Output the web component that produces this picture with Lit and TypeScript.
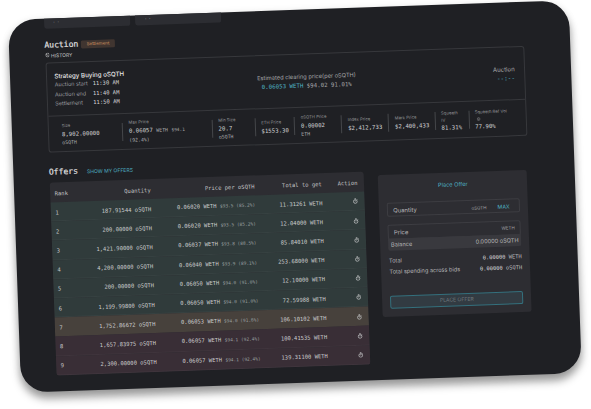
import { LitElement, html, svg, css } from "lit";
import { customElement } from "lit/decorators.js";

type Offer = [string, string, string, string, string];

const OFFERS: Offer[] = [
  ["187.91544", "0.06020", "$93.5 (85.2%)", "11.31261", "bid"],
  ["200.00000", "0.06020", "$93.5 (85.2%)", "12.04000", "bid"],
  ["1,421.90000", "0.06037", "$93.8 (88.5%)", "85.84010", "bid"],
  ["4,200.00000", "0.06040", "$93.9 (89.1%)", "253.68000", "bid"],
  ["200.00000", "0.06050", "$94.0 (91.0%)", "12.10000", "bid"],
  ["1,199.99800", "0.06050", "$94.0 (91.0%)", "72.59988", "bid"],
  ["1,752.86672", "0.06053", "$94.0 (91.6%)", "106.10102", "edge"],
  ["1,657.83975", "0.06057", "$94.1 (92.4%)", "100.41535", "out"],
  ["2,300.00000", "0.06057", "$94.1 (92.4%)", "139.31100", "out"],
];

const timer = svg`<circle cx="5" cy="6" r="3.4"/><path d="M3.6 .9h2.8M5 6V3.8M7.6 3.3l.9-.9"/>`;

@customElement("app-root")
export class AppRoot extends LitElement {
  static styles = css`
    :host {
      display: block;
      width: 591px;
      height: 409px;
      overflow: hidden;
      background: #fff;
      font-family: Inter, "Noto Sans", sans-serif;
      color: #b9b9bb;
      --mono: "DejaVu Sans Mono", "Liberation Mono", monospace;
      --cyan: #4fb3c4;
      --line: #37383c;
    }
    :host::before { content: ""; display: table; }
    * { box-sizing: border-box; }
    .tablet {
      width: 560.5px;
      height: 372.5px;
      margin: 20px 0 0 8.4px;
      padding: 0 46px 0 35.5px;
      border-radius: 27px;
      background: #1f2024;
      box-shadow: 0 7px 9px rgba(0, 0, 0, 0.36), 0 2px 8px rgba(0, 0, 0, 0.1);
      transform: rotate(-2.02deg);
      transform-origin: 0 0;
      display: flex;
      flex-direction: column;
      white-space: nowrap;
    }
    .tabs { display: flex; gap: 5.7px; height: 9.6px; }
    .tab {
      width: 86px;
      background: #2c2d32;
      border-radius: 0 0 2.5px 2.5px;
      padding: 0.5px 0 0 9px;
      font: 5px/2px var(--mono);
      letter-spacing: -1px;
      color: #8b8c8f;
    }
    .title-row { display: flex; align-items: center; height: 10px; margin-top: 12.4px; }
    .title {
      font: 8.05px/10px var(--mono);
      color: #e4e4e5;
      -webkit-text-stroke: 0.15px currentColor;
    }
    .tag {
      width: 33.7px;
      height: 7.6px;
      margin-left: 2.9px;
      border-radius: 1.5px;
      background: #403530;
      color: #cf9361;
      font-size: 4.5px;
      line-height: 7.6px;
      text-align: center;
    }
    .history {
      display: flex;
      align-items: center;
      gap: 1.4px;
      height: 9.6px;
      font-size: 4.95px;
      color: #cacacc;
    }
    .history svg { width: 4.8px; height: 4.8px; }
    svg { fill: none; stroke: currentColor; }
    .auction {
      height: 90.2px;
      margin-top: 2.1px;
      border: 1px solid var(--line);
      border-radius: 3px;
    }
    .summary {
      display: flex;
      height: 53.8px;
      padding: 8.2px 8.9px 0 7.8px;
      border-bottom: 1px solid var(--line);
      line-height: 9.5px;
    }
    .schedule { width: 160px; }
    .strategy { font-size: 6.2px; font-weight: 500; color: #e8e8e9; }
    .time { display: grid; grid-template-columns: 38px auto; font-size: 5.5px; color: #9c9da0; }
    .mono { font-family: var(--mono); }
    .time .mono { font-size: 5.5px; color: #d6d6d8; }
    .center {
      width: 184px;
      text-align: center;
      padding-top: 9.4px;
      font-size: 5.7px;
      color: #a6a7a9;
    }
    .clearing { font: 5.75px/8.2px var(--mono); }
    .cyan { color: var(--cyan); }
    .right { flex: 1; text-align: right; padding-top: 9px; font-size: 6px; color: #a6a7a9; }
    .stats {
      display: grid;
      grid-template-columns: 73.8px 89.7px 42.8px 39.7px 47px 47px 46.4px 33.7px 1fr;
      height: 34.4px;
      align-items: center;
      padding-top: 0.9px;
    }
    .stat {
      display: flex;
      flex-direction: column;
      justify-content: center;
      height: 18px;
      padding-left: 5.6px;
      border-left: 1px solid #45464a;
    }
    .stat:first-child { border-left: 0; padding-left: 13.4px; }
    .label { font-size: 4.25px; line-height: 7.7px; color: #929396; }
    .label.tight { line-height: 7.2px; }
    .label svg { display: block; width: 3.6px; height: 7.2px; margin-left: 2.3px; stroke-width: 1.4; }
    .value { font: 5.7px/8.4px var(--mono); color: #d0d0d2; }
    .unit { font: 4.85px/8.4px var(--mono); color: #b2b3b5; }
    .fiat { font-size: 4.5px; color: #a2a3a6; }
    .offers-head { display: flex; align-items: center; height: 12px; margin-top: 14.6px; }
    .show { margin-left: 8.9px; font-size: 5.05px; color: var(--cyan); }
    .bottom { display: flex; gap: 14.4px; align-items: flex-start; margin-top: 3.7px; }
    .table { width: 314px; border-radius: 3px; overflow: hidden; background: #2d2d32; }
    .row {
      display: grid;
      grid-template-columns: 25px 71.1px 103.9px 67.3px 1fr;
      align-items: center;
      height: 19.2px;
      padding: 0.9px 6px 0 5px;
      font: 5.5px/8px var(--mono);
      color: #cbcccd;
      text-align: right;
      border-bottom: 1px solid rgba(255, 255, 255, 0.035);
    }
    .row > :first-child { text-align: left; }
    .row.head { height: 19.9px; color: #c3c3c5; border-bottom: 0; }
    .bid { background: #303b3b; }
    .edge { background: #47413c; border-bottom-color: transparent; }
    .out { background: #392e36; }
    .row .fiat { font-size: 4.5px; color: #9ba0a1; }
    .action { height: 6.4px; line-height: 0; }
    .action svg { width: 5.4px; height: 6.2px; stroke-width: 1.3; }
    .form {
      width: 149.6px;
      height: 142px;
      margin-top: 4px;
      padding: 0 8.4px;
      border-radius: 2.5px;
      background: #2d2d32;
      font-size: 5.6px;
    }
    .form-title { padding-top: 7.8px; line-height: 9px; text-align: center; color: var(--cyan); }
    .line { display: flex; align-items: center; justify-content: space-between; }
    .input { height: 14.2px; border: 1px solid #3d3d42; border-radius: 2px; padding: 0 5px; }
    .quantity { margin-top: 11.2px; padding-right: 9.4px; font-size: 5.9px; }
    .price { margin-top: 8px; font-size: 5.9px; }
    .suffix { font-size: 4.5px; color: #a0a0a3; }
    .max { margin-left: 11px; font-size: 5.3px; color: var(--cyan); }
    .balance {
      height: 12px;
      margin-top: -0.6px;
      padding: 0 2.6px;
      background: #39393e;
      border-radius: 0 0 2px 2px;
    }
    .total { height: 10.6px; }
    .total.first { margin-top: 5.2px; }
    .total .mono { font-size: 5.4px; }
    .strong { color: #dcdcde; }
    .button {
      height: 13.5px;
      margin-top: 18.4px;
      border: 1px solid #34707d;
      border-radius: 2px;
      background: #323b42;
      color: #70787d;
      font-size: 5.1px;
      line-height: 11.5px;
      text-align: center;
    }
  `;

  private stat(label: string, value: unknown, unit = "") {
    return html`<div class="stat">
      <span class="label">${label}</span>
      <span class="value">${value}</span>
      ${unit ? html`<span class="unit">${unit}</span>` : ""}
    </div>`;
  }

  render() {
    return html`<div class="tablet">
      <div class="tabs"><div class="tab">. .</div><div class="tab">. .</div></div>
      <div class="title-row"><span class="title">Auction</span><span class="tag">Settlement</span></div>
      <div class="history">
        <svg viewBox="0 0 10 10" stroke-width="1.3"><circle cx="5" cy="5" r="4"/><path d="M1.5 3.4L5 5.4h2.3"/></svg>
        HISTORY
      </div>
      <section class="auction">
        <div class="summary">
          <div class="schedule">
            <div class="strategy">Strategy Buying oSQTH</div>
            <div class="time"><span>Auction start</span><span class="mono">11:30 AM</span></div>
            <div class="time"><span>Auction end</span><span class="mono">11:40 AM</span></div>
            <div class="time"><span>Settlement</span><span class="mono">11:50 AM</span></div>
          </div>
          <div class="center">
            <div>Estimated clearing price(per oSQTH)</div>
            <div class="clearing"><span class="cyan">0.06053 WETH</span> $94.02 91.01%</div>
          </div>
          <div class="right"><div>Auction</div><div class="mono cyan">--:--</div></div>
        </div>
        <div class="stats">
          ${this.stat("Size", "8,902.00000", "oSQTH")}
          ${this.stat("Max Price", html`0.06057 <span class="unit">WETH</span> <span class="fiat">$94.1</span>`, "(92.4%)")}
          ${this.stat("Min Size", "20.7", "oSQTH")}
          ${this.stat("ETH Price", "$1553.30")}
          ${this.stat("oSQTH Price", "0.00002", "ETH")}
          ${this.stat("Index Price", "$2,412,733")}
          ${this.stat("Mark Price", "$2,400,433")}
          <div class="stat">
            <span class="label tight">Squeeth</span><span class="label tight">IV</span>
            <span class="value">81.31%</span>
          </div>
          <div class="stat">
            <span class="label tight">Squeeth Ref Vol</span>
            <span class="label tight"><svg viewBox="0 0 10 10"><circle cx="5" cy="5" r="4"/><path d="M5 4.5v3M5 2.4v1"/></svg></span>
            <span class="value">77.90%</span>
          </div>
        </div>
      </section>
      <div class="offers-head"><span class="title">Offers</span><span class="show">SHOW MY OFFERS</span></div>
      <div class="bottom">
        <div class="table">
          <div class="row head">
            <span>Rank</span><span>Quantity</span><span>Price per oSQTH</span><span>Total to get</span><span>Action</span>
          </div>
          ${OFFERS.map(([qty, price, fiat, total, kind], i) => html`<div class="row ${kind}">
            <span>${i + 1}</span>
            <span>${qty} oSQTH</span>
            <span>${price} WETH <span class="fiat">${fiat}</span></span>
            <span>${total} WETH</span>
            <span class="action"><svg viewBox="0 0 10 10">${timer}</svg></span>
          </div>`)}
        </div>
        <div class="form">
          <div class="form-title">Place Offer</div>
          <div class="line input quantity">
            <span>Quantity</span>
            <span><span class="suffix">oSQTH</span><span class="max">MAX</span></span>
          </div>
          <div class="line input price"><span>Price</span><span class="suffix">WETH</span></div>
          <div class="line balance"><span>Balance</span><span>0.00000 oSQTH</span></div>
          <div class="line total first"><span>Total</span><span class="mono"><span class="strong">0.00000</span> WETH</span></div>
          <div class="line total"><span>Total spending across bids</span><span class="mono"><span class="strong">0.00000</span> oSQTH</span></div>
          <div class="button">PLACE OFFER</div>
        </div>
      </div>
    </div>`;
  }
}
